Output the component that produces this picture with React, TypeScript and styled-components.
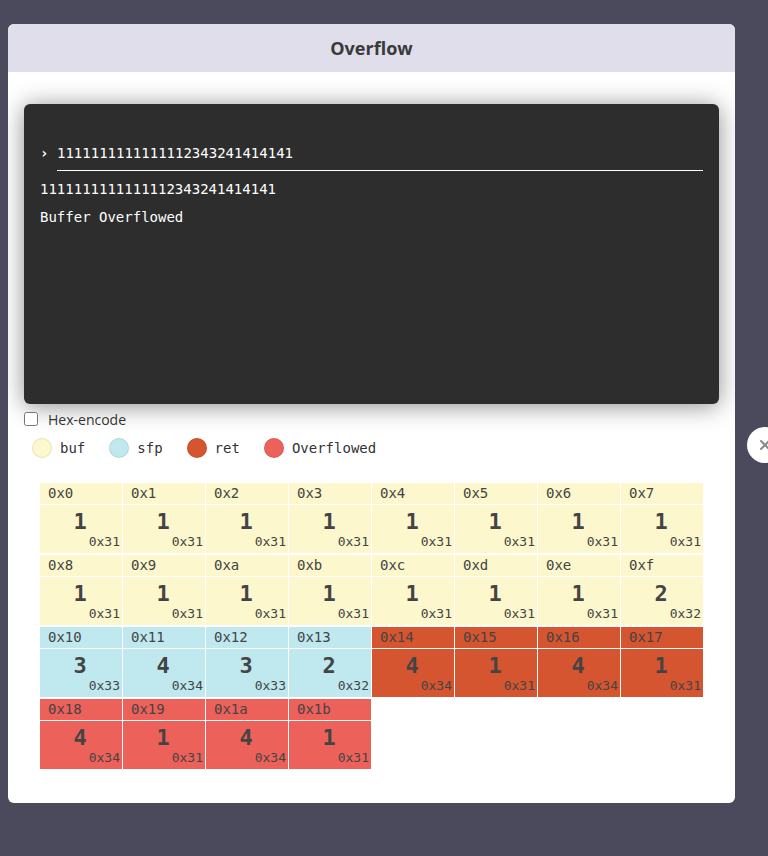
import styled, { createGlobalStyle } from "styled-components";
import { X } from "lucide-react";

const INPUT = "1111111111111112343241414141";

type Kind = "buf" | "sfp" | "ret" | "over";

const COLORS: Record<Kind, string> = {
  buf: "#fcf7cc",
  sfp: "#bfe8ef",
  ret: "#d4552f",
  over: "#ed615b",
};

const LEGEND: { kind: Kind; label: string }[] = [
  { kind: "buf", label: "buf" },
  { kind: "sfp", label: "sfp" },
  { kind: "ret", label: "ret" },
  { kind: "over", label: "Overflowed" },
];

const kindOf = (i: number): Kind => {
  if (i < 16) return "buf";
  if (i < 20) return "sfp";
  if (i < 24) return "ret";
  return "over";
};

const App = () => {
  return (
    <>
      <GlobalStyle />
      <Page>
        <Card>
          <Header>Overflow</Header>
          <Body>
            <Terminal>
              <InputRow>
                <Prompt>›</Prompt>
                <InputText>{INPUT}</InputText>
              </InputRow>
              <OutLine>{INPUT}</OutLine>
              <OutLine>Buffer Overflowed</OutLine>
            </Terminal>
            <CheckRow>
              <Check type="checkbox" />
              <CheckLabel>Hex-encode</CheckLabel>
            </CheckRow>
            <Legend>
              {LEGEND.map((l) => (
                <LegendItem key={l.kind}>
                  <Dot $kind={l.kind} />
                  <LegendText>{l.label}</LegendText>
                </LegendItem>
              ))}
            </Legend>
            <Grid>
              {INPUT.split("").map((ch, i) => (
                <Cell key={i} $kind={kindOf(i)}>
                  <Addr>0x{i.toString(16)}</Addr>
                  <Value>
                    <Char>{ch}</Char>
                    <Hex>0x{ch.charCodeAt(0).toString(16)}</Hex>
                  </Value>
                </Cell>
              ))}
            </Grid>
          </Body>
        </Card>
        <CloseButton>
          <X size={16} strokeWidth={3} color="#8a8a8a" />
        </CloseButton>
      </Page>
    </>
  );
};

export default App;

//styled-components
const GlobalStyle = createGlobalStyle`
  html, body {
    margin: 0;
    overflow: hidden;
    background: #4b4a5c;
  }
`;

const Page = styled.div`
  position: relative;
  width: 768px;
  height: 856px;
  padding: 24px 0 0 8px;
  box-sizing: border-box;
`;

const Card = styled.div`
  width: 727px;
  background: #fff;
  border-radius: 6px;
  overflow: hidden;
`;

const Header = styled.div`
  height: 48px;
  background: #dfdeea;

  display: flex;
  justify-content: center;
  align-items: center;

  font-family: "Open Sans", sans-serif;
  font-weight: 700;
  font-size: 18px;
  color: #3a3a3a;
`;

const Body = styled.div`
  padding: 32px 16px 34px;
`;

const Terminal = styled.div`
  height: 300px;
  box-sizing: border-box;
  padding: 39px 16px 16px;
  background: #2d2d2d;
  border-radius: 6px;
  box-shadow: 0 2px 24px rgba(0, 0, 0, 0.45);

  font-family: "DejaVu Sans Mono", monospace;
  font-size: 14px;
  line-height: 20px;
  color: #fff;
`;

const InputRow = styled.div`
  display: flex;
  align-items: flex-start;
`;

const Prompt = styled.div`
  width: 17px;
  font-weight: 700;
`;

const InputText = styled.div`
  flex: 1;
  padding-bottom: 7px;
  border-bottom: 1px solid #fff;
`;

const OutLine = styled.div`
  margin-top: 8px;
`;

const CheckRow = styled.label`
  display: flex;
  align-items: center;
  margin-top: 6px;
  height: 18px;
`;

const Check = styled.input`
  width: 14px;
  height: 14px;
  margin: 0 10px 0 0;
`;

const CheckLabel = styled.span`
  font-family: "Open Sans", sans-serif;
  font-size: 14px;
  color: #333;
`;

const Legend = styled.div`
  display: flex;
  align-items: center;
  padding: 10px 0 0 8px;
`;

const LegendItem = styled.div`
  display: flex;
  align-items: center;
  margin-right: 24px;
`;

const Dot = styled.div<{ $kind: Kind }>`
  width: 20px;
  height: 20px;
  box-sizing: border-box;
  border-radius: 50%;
  background: ${(p) => COLORS[p.$kind]};
  border: 1px solid rgba(0, 0, 0, 0.08);
  margin-right: 8px;
`;

const LegendText = styled.span`
  font-family: "DejaVu Sans Mono", monospace;
  font-size: 14px;
  color: #333;
`;

const Grid = styled.div`
  margin: 25px 0 0 16px;
  display: grid;
  grid-template-columns: repeat(8, 82px);
  column-gap: 1px;
  row-gap: 2px;
`;

const Cell = styled.div<{ $kind: Kind }>`
  display: flex;
  flex-direction: column;
  gap: 1px;

  & > div {
    background: ${(p) => COLORS[p.$kind]};
  }

  font-family: "DejaVu Sans Mono", monospace;
  color: #444;
`;

const Addr = styled.div`
  height: 21px;
  padding-left: 8px;
  font-size: 14px;
  line-height: 21px;
`;

const Value = styled.div`
  height: 48px;
  box-sizing: border-box;
  padding: 4px 2px 4px 0;

  display: flex;
  flex-direction: column;
`;

const Char = styled.div`
  text-align: center;
  font-size: 22px;
  font-weight: 700;
  line-height: 26px;
`;

const Hex = styled.div`
  text-align: right;
  font-size: 13px;
  line-height: 14px;
`;

const CloseButton = styled.div`
  position: absolute;
  left: 747px;
  top: 427px;
  width: 36px;
  height: 36px;
  border-radius: 50%;
  background: #fff;

  display: flex;
  justify-content: center;
  align-items: center;
`;
